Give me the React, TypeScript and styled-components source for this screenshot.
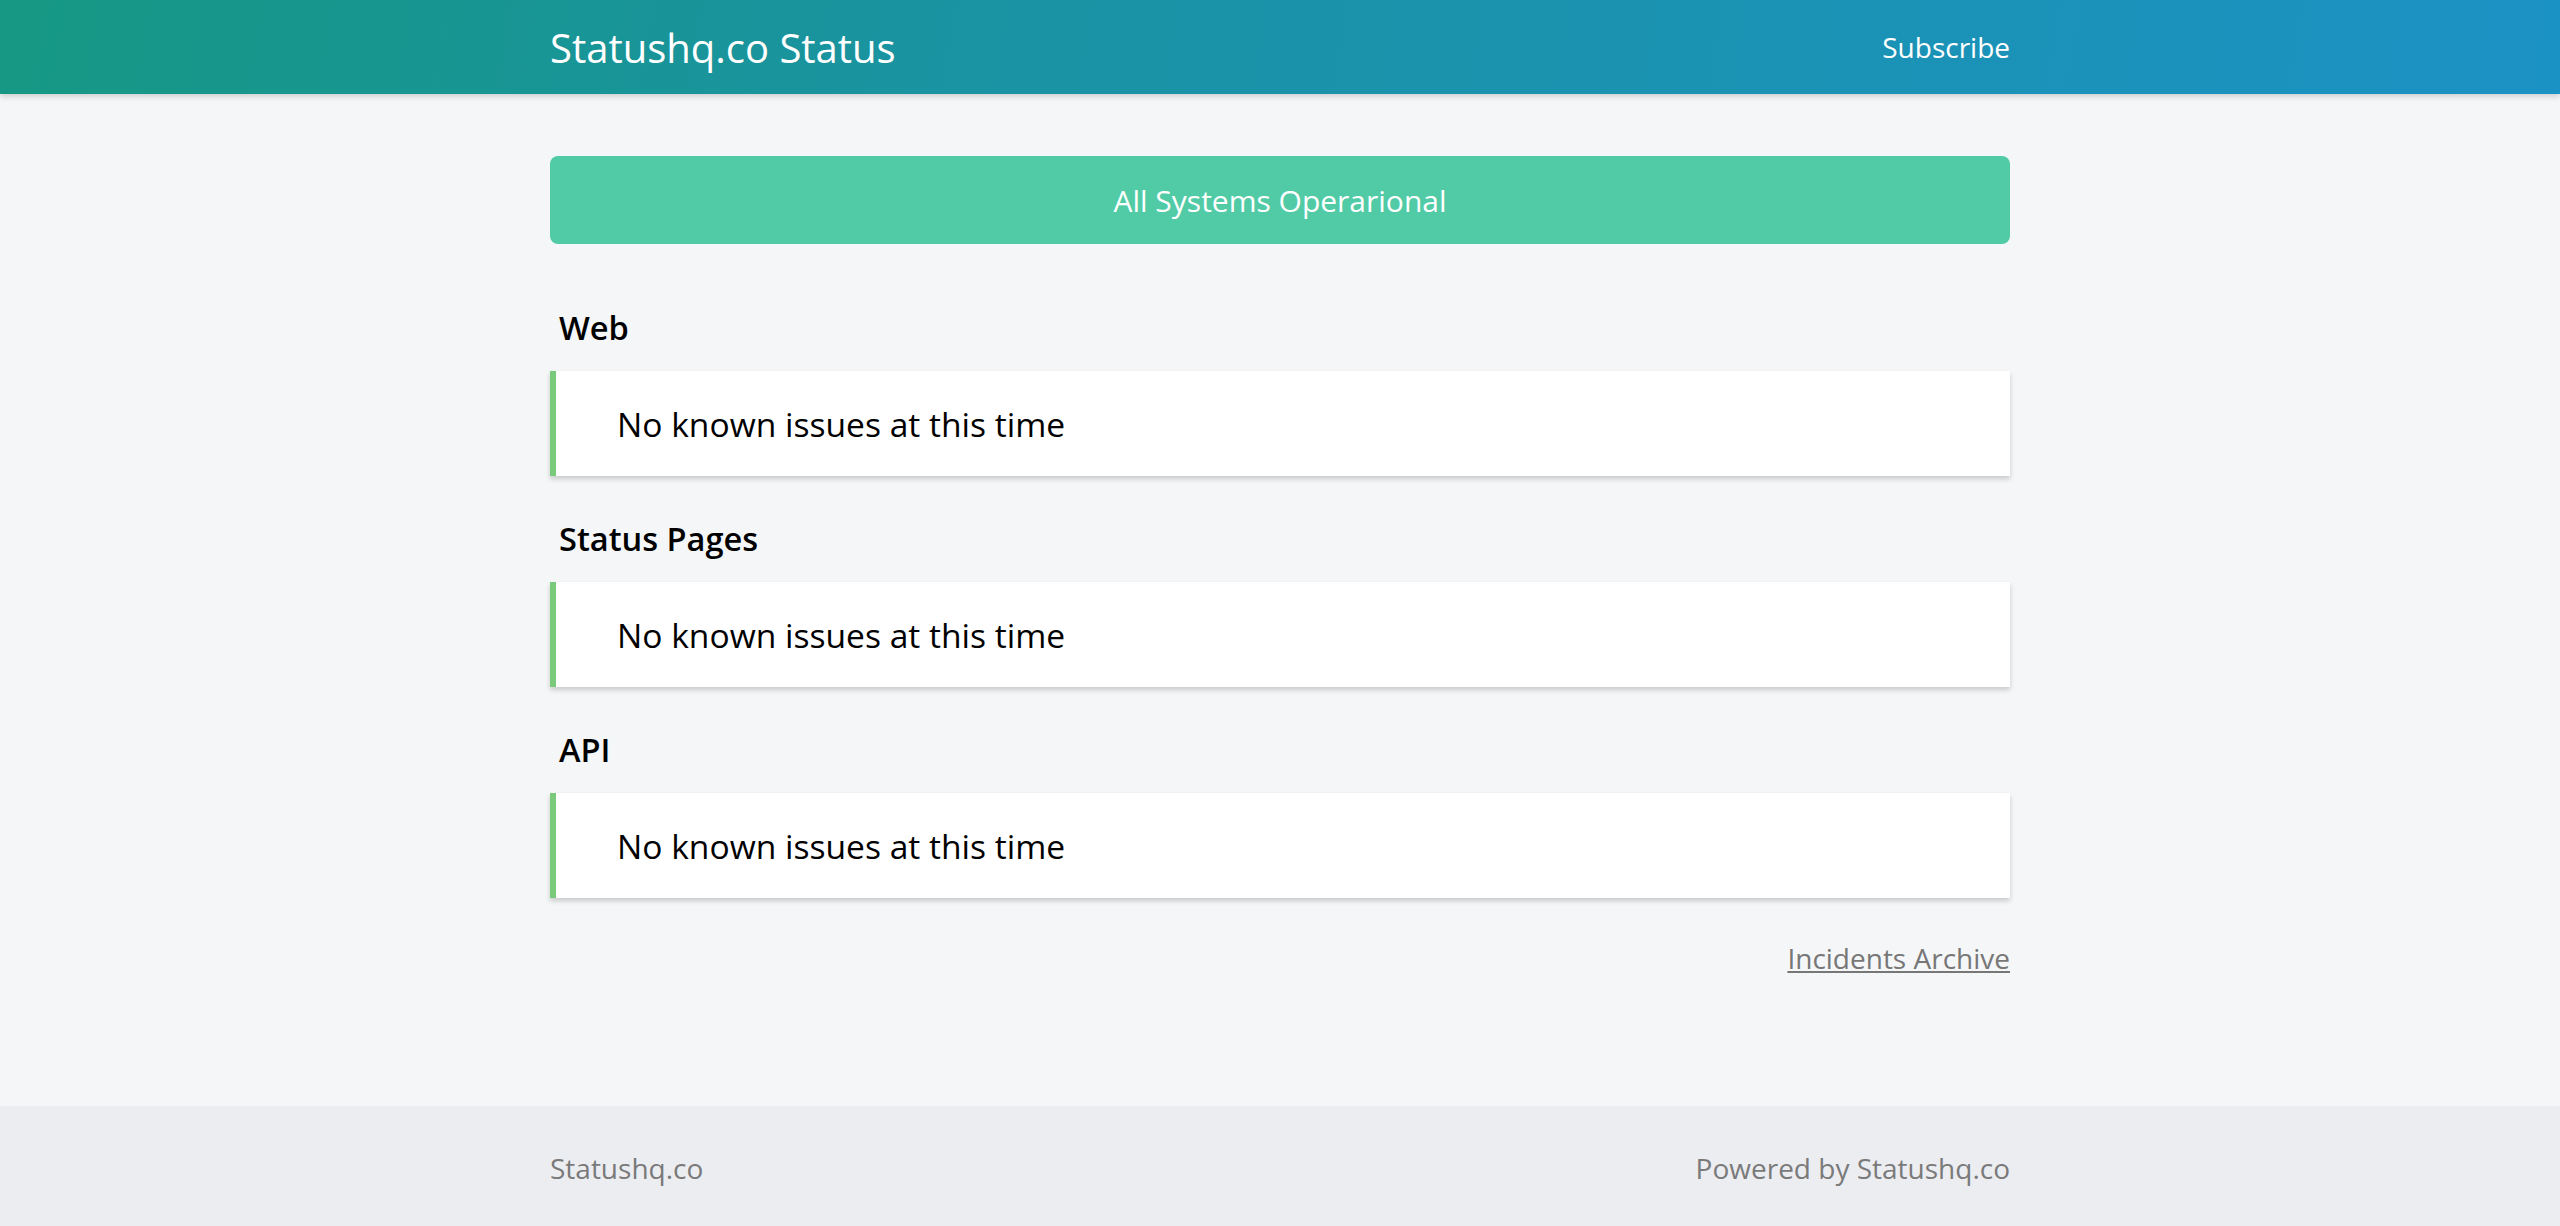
import React from 'react';
import styled, { createGlobalStyle } from 'styled-components';

const GlobalStyle = createGlobalStyle`
    html, body {
        margin: 0;
        padding: 0;
        background: #f5f6f8;
        font-family: "Open Sans", "Liberation Sans", sans-serif;
    }
`;

const Page = styled.div`
    min-height: 1226px;
    display: flex;
    flex-direction: column;
    background: #f5f6f8;
`;

const Header = styled.header`
    height: 94px;
    background: linear-gradient(100deg, #169884 0%, #1a93a4 40%, #1b92c4 100%);
    box-shadow: 0 2px 6px rgba(0, 0, 0, 0.18);
    position: relative;
    z-index: 1;
`;

const Container = styled.div`
    width: 1460px;
    margin: 0 auto;
`;

const HeaderInner = styled(Container)`
    height: 100%;
    display: flex;
    align-items: center;
    justify-content: space-between;
`;

const Title = styled.h1`
    margin: 0;
    font-size: 40px;
    font-weight: 400;
    color: #ffffff;
`;

const SubscribeLink = styled.a`
    font-size: 28px;
    color: #ffffff;
    text-decoration: none;
    cursor: pointer;
`;

const Main = styled.main`
    flex: 1;
    padding: 62px 0 127px;
`;

const Banner = styled.div`
    height: 88px;
    border-radius: 8px;
    background: #51cba6;
    color: #ffffff;
    font-size: 30px;
    display: flex;
    align-items: center;
    justify-content: center;
`;

const Section = styled.section`
    margin-top: 38px;
    &:first-of-type {
        margin-top: 59px;
    }
`;

const SectionTitle = styled.h2`
    margin: 0 0 18px;
    padding-left: 9px;
    font-size: 32.6px;
    line-height: 50px;
    font-weight: 600;
    color: #000000;
`;

const Card = styled.div<{ $color: string }>`
    height: 105px;
    box-sizing: border-box;
    background: #ffffff;
    border-left: 6px solid ${props => props.$color};
    box-shadow: 0 3px 5px rgba(0, 0, 0, 0.18);
    padding-left: 61px;
    display: flex;
    align-items: center;
    font-size: 33.6px;
    color: #000000;
`;

const ArchiveRow = styled.div`
    margin-top: 40px;
    display: flex;
    justify-content: flex-end;
`;

const ArchiveLink = styled.a`
    font-size: 28px;
    line-height: 40px;
    color: #777777;
    text-decoration: underline;
    cursor: pointer;
`;

const Footer = styled.footer`
    background: #ecedf1;
    padding: 42px 0 38px;
`;

const FooterInner = styled(Container)`
    display: flex;
    justify-content: space-between;
    font-size: 28px;
    line-height: 40px;
    color: #7a7a7a;
`;

const sections = ['Web', 'Status Pages', 'API'];

const App: React.FC = () => {
    return (
        <>
            <GlobalStyle />
            <Page>
                <Header>
                    <HeaderInner>
                        <Title>Statushq.co Status</Title>
                        <SubscribeLink>Subscribe</SubscribeLink>
                    </HeaderInner>
                </Header>
                <Main>
                    <Container>
                        <Banner>All Systems Operarional</Banner>
                        {sections.map(name => (
                            <Section key={name}>
                                <SectionTitle>{name}</SectionTitle>
                                <Card $color="#79cb7b">No known issues at this time</Card>
                            </Section>
                        ))}
                        <ArchiveRow>
                            <ArchiveLink>Incidents Archive</ArchiveLink>
                        </ArchiveRow>
                    </Container>
                </Main>
                <Footer>
                    <FooterInner>
                        <span>Statushq.co</span>
                        <span>Powered by Statushq.co</span>
                    </FooterInner>
                </Footer>
            </Page>
        </>
    );
};

export default App;
